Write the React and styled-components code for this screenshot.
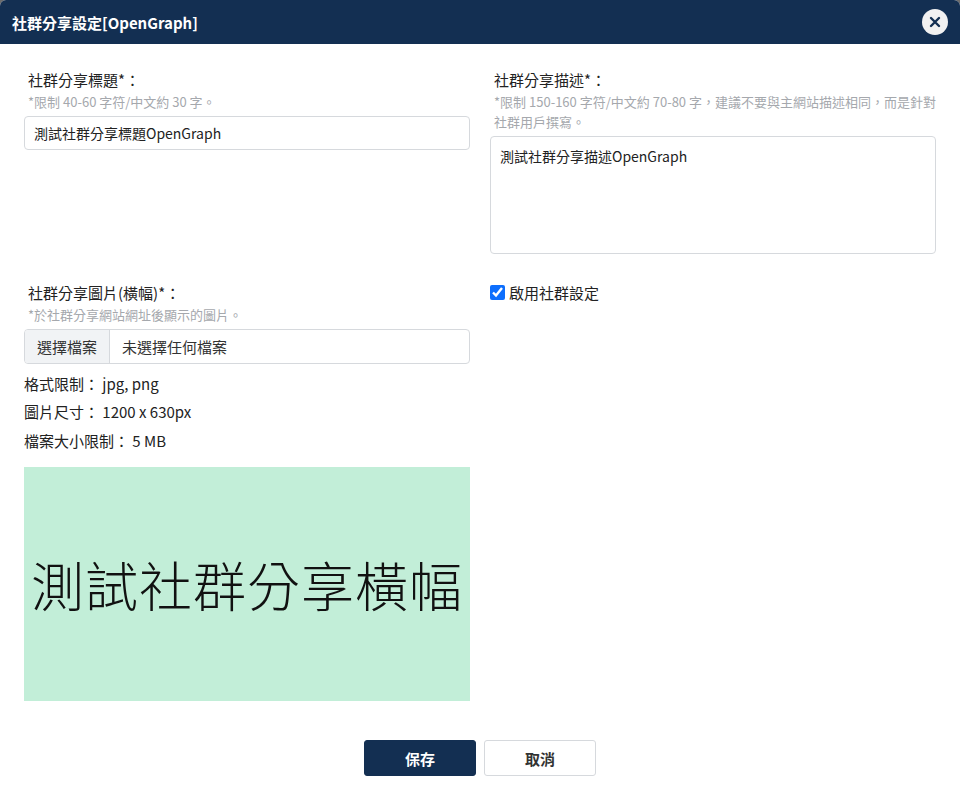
import styled, { createGlobalStyle } from "styled-components";

const Global = createGlobalStyle`
  html, body { margin: 0; background: #6b6b6b; }
  body { font-family: "Noto Sans CJK TC", "Noto Sans", sans-serif; }
`;

const Dialog = styled.div`
  width: 960px;
  height: 793px;
  background: #fff;
  border-radius: 6px 6px 0 0;
  overflow: hidden;
  display: flex;
  flex-direction: column;
`;

const Header = styled.div`
  height: 44px;
  background: #132f52;
  color: #fff;
  display: flex;
  align-items: center;
  justify-content: space-between;
  padding: 0 12px 0 12px;
  font-size: 15px;
  font-weight: 700;
`;

const Close = styled.button`
  width: 26px;
  height: 26px;
  border-radius: 50%;
  border: none;
  background: #f1f1f1;
  display: flex;
  align-items: center;
  justify-content: center;
  padding: 0;
`;

const Body = styled.div`
  padding: 24px 24px 0 24px;
  display: grid;
  grid-template-columns: 446px 446px;
  column-gap: 20px;
  flex: 1;
`;

const Field = styled.div`
  display: flex;
  flex-direction: column;
  margin-bottom: ${(p) => p.$mb || 0}px;
`;

const Label = styled.div`
  font-size: 15px;
  color: #222;
  padding-left: 4px;
  line-height: 24px;
`;

const Hint = styled.div`
  font-size: 13px;
  color: #a5a8ad;
  padding-left: 4px;
  line-height: 20px;
  margin-bottom: 4px;
`;

const Input = styled.div`
  height: 34px;
  border: 1px solid #d6d9dd;
  border-radius: 4px;
  box-sizing: border-box;
  display: flex;
  align-items: center;
  padding: 0 9px;
  font-size: 14px;
  color: #222;
`;

const TextArea = styled.div`
  height: 118px;
  border: 1px solid #d6d9dd;
  border-radius: 4px;
  box-sizing: border-box;
  padding: 9px 9px;
  font-size: 14px;
  color: #222;
`;

const FileInput = styled.div`
  height: 35px;
  border: 1px solid #d6d9dd;
  border-radius: 4px;
  box-sizing: border-box;
  display: flex;
  font-size: 15px;
  color: #333;
  overflow: hidden;
`;

const FileBtn = styled.div`
  background: #f1f3f5;
  border-right: 1px solid #d6d9dd;
  padding: 0 12px;
  display: flex;
  align-items: center;
`;

const FileName = styled.div`
  padding: 0 12px;
  display: flex;
  align-items: center;
`;

const Info = styled.div`
  font-size: 15px;
  color: #222;
  line-height: 28.5px;
`;

const Preview = styled.div`
  height: 234px;
  margin-top: 12px;
  background: #c2eed8;
  display: flex;
  align-items: center;
  justify-content: center;
  font-size: 53px;
  color: #111;
  font-weight: 300;
  letter-spacing: 1px;
`;

const Check = styled.label`
  display: flex;
  align-items: center;
  gap: 4px;
  font-size: 15px;
  color: #222;
  margin-top: 1px;
  input { width: 15px; height: 15px; margin: 0; accent-color: #0d6efd; }
`;

const Footer = styled.div`
  display: flex;
  justify-content: center;
  gap: 8px;
  padding: 32px 0 17px;
`;

const Button = styled.button`
  width: 112px;
  height: 36px;
  border-radius: 3px;
  font-family: inherit;
  font-size: 15px;
  font-weight: 700;
  border: 1px solid ${(p) => (p.$primary ? "#132f52" : "#d6d9dd")};
  background: ${(p) => (p.$primary ? "#132f52" : "#fff")};
  color: ${(p) => (p.$primary ? "#fff" : "#333")};
`;

export default function App() {
  return (
    <Dialog>
      <Global />
      <Header>
        <span>社群分享設定[OpenGraph]</span>
        <Close>
          <svg width="12" height="12" viewBox="0 0 12 12">
            <path d="M2 2L10 10M10 2L2 10" stroke="#132f52" strokeWidth="2.4" strokeLinecap="round" />
          </svg>
        </Close>
      </Header>
      <Body>
        <Field $mb={20}>
          <Label>社群分享標題*：</Label>
          <Hint>*限制 40-60 字符/中文約 30 字。</Hint>
          <Input>測試社群分享標題OpenGraph</Input>
        </Field>
        <Field $mb={20}>
          <Label>社群分享描述*：</Label>
          <Hint>*限制 150-160 字符/中文約 70-80 字，建議不要與主網站描述相同，而是針對社群用戶撰寫。</Hint>
          <TextArea>測試社群分享描述OpenGraph</TextArea>
        </Field>
        <Field>
          <Label>社群分享圖片(橫幅)*：</Label>
          <Hint>*於社群分享網站網址後顯示的圖片。</Hint>
          <FileInput>
            <FileBtn>選擇檔案</FileBtn>
            <FileName>未選擇任何檔案</FileName>
          </FileInput>
          <div style={{ height: 6 }} />
          <Info>格式限制： jpg, png</Info>
          <Info>圖片尺寸： 1200 x 630px</Info>
          <Info>檔案大小限制： 5 MB</Info>
          <Preview>測試社群分享橫幅</Preview>
        </Field>
        <Field>
          <Check>
            <input type="checkbox" defaultChecked />
            啟用社群設定
          </Check>
        </Field>
      </Body>
      <Footer>
        <Button $primary>保存</Button>
        <Button>取消</Button>
      </Footer>
    </Dialog>
  );
}
